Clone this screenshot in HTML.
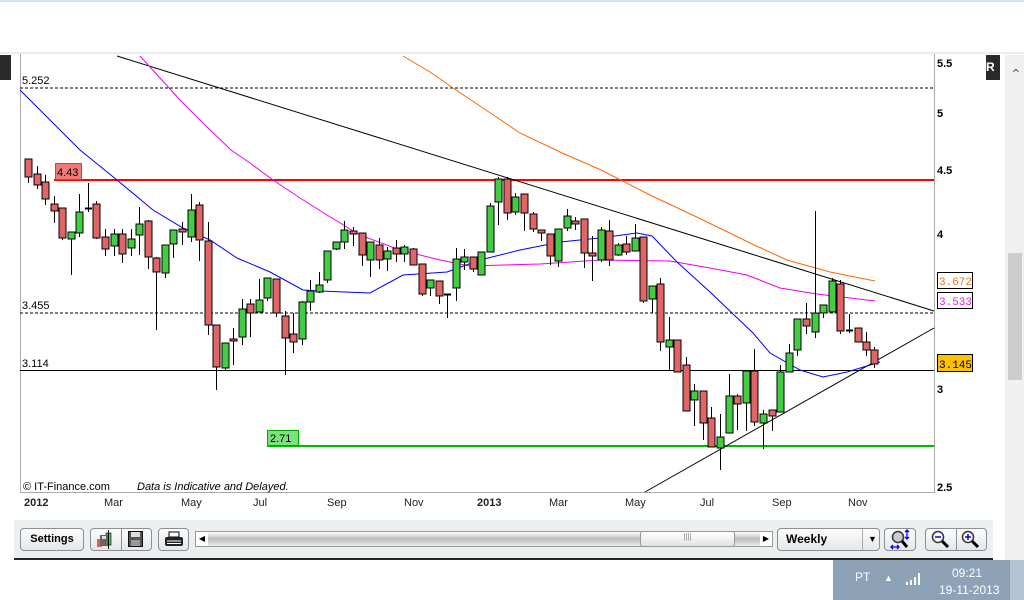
<!DOCTYPE html>
<html><head><meta charset="utf-8"><style>
body{margin:0;width:1024px;height:600px;overflow:hidden;background:#fff;font-family:"Liberation Sans",sans-serif;position:relative}
.a{position:absolute}
.btn{position:absolute;border:1px solid #8a9095;border-radius:4px;background:linear-gradient(#fdfdfd,#e4e6e8);box-sizing:border-box}
.xl{position:absolute;top:497px;font-size:11px;color:#222}
</style></head><body>
<div class="a" style="left:0;top:0;width:1024px;height:2px;background:#cfe3f3"></div>
<div class="a" style="left:0;top:52px;width:1024px;height:2px;background:#e6eef5"></div>
<div class="a" style="left:0;top:55px;width:11px;height:25px;background:#2a2a2a"></div>
<div class="a" style="left:986px;top:55px;width:14px;height:25px;background:#2a2a2a;color:#fff;font-size:12px;font-weight:bold;line-height:25px">R</div>
<div class="a" style="left:1005px;top:55px;width:19px;height:505px;background:#f0f0f0"></div>
<div class="a" style="left:1008px;top:253px;width:14px;height:127px;background:#cdcdcd"></div>
<div class="a" style="left:1010px;top:66px;font-size:14px;color:#666">&#8963;</div>
<svg class="a" style="left:0;top:0" width="1005" height="520" id="c">
<line x1="20.5" y1="54" x2="20.5" y2="493" stroke="#aaa"/>
<line x1="20" y1="492.5" x2="934" y2="492.5" stroke="#aaa"/>
<line x1="934.5" y1="54" x2="934.5" y2="493" stroke="#aaa"/>
<line x1="20" y1="88" x2="934" y2="88" stroke="#000" stroke-dasharray="3,2"/>
<line x1="20" y1="313" x2="934" y2="313" stroke="#000" stroke-dasharray="3,2"/>
<line x1="20" y1="370.5" x2="934" y2="370.5" stroke="#000"/>
<line x1="54" y1="180" x2="934" y2="180" stroke="#f00" stroke-width="2"/>
<line x1="267" y1="446" x2="934" y2="446" stroke="#0b0" stroke-width="2"/>
<rect x="55.5" y="163.5" width="26" height="16" fill="#f07a7a" stroke="#e33"/>
<text x="57" y="176" font-size="11">4.43</text>
<rect x="267.5" y="430.5" width="31" height="15" fill="#7de07d" stroke="#0a0"/>
<text x="270" y="442" font-size="11">2.71</text>
<text x="22" y="84" font-size="11">5.252</text>
<text x="22" y="309" font-size="11">3.455</text>
<text x="22" y="367" font-size="11">3.114</text>
<text x="23" y="490" font-size="11">© IT-Finance.com</text>
<text x="137" y="490" font-size="11" font-style="italic">Data is Indicative and Delayed.</text>
<g font-size="11" font-weight="bold"><text x="937" y="67">5.5</text><text x="937" y="117">5</text><text x="937" y="174">4.5</text><text x="937" y="238">4</text><text x="937" y="393">3</text><text x="937" y="491">2.5</text></g>
<rect x="937.5" y="272.5" width="35" height="16" fill="#fff" stroke="#000"/><text x="939" y="285" font-size="11" fill="#f07020" font-family="Liberation Mono">3.672</text>
<rect x="937.5" y="292.5" width="35" height="16" fill="#fff" stroke="#000"/><text x="939" y="305" font-size="11" fill="#e020e0" font-family="Liberation Mono">3.533</text>
<rect x="937.5" y="354.5" width="35" height="17" fill="#ffc000" stroke="#000"/><text x="939" y="368" font-size="11" font-family="Liberation Mono">3.145</text>
<line x1="117" y1="56" x2="934" y2="311" stroke="#000"/>
<line x1="645" y1="492" x2="934" y2="328" stroke="#000"/>
<polyline fill="none" stroke="#f60" points="403,56 430,72 453,88 480,106 520,133 560,152 601,170 650,195 703,220 750,243 787,260 830,272 875,281"/>
<polyline fill="none" stroke="#e0e" points="140,56 160,78 180,100 205,125 231,150 250,163 273,180 300,198 327,215 360,235 400,250 440,260 470,266 540,264 600,260 670,261 710,268 747,275 780,288 817,294 875,301"/>
<polyline fill="none" stroke="#00f" points="20,90 50,120 80,150 117,180 153,210 183,228 210,240 237,258 270,272 303,290 320,291 370,293 403,275 447,272 480,260 520,250 560,242 600,238 637,233 652,236 677,262 710,292 753,333 770,353 800,370 823,377 847,372 880,362"/>
<g id="cd"></g>
</svg>
<div class="xl" style="left:24px;font-weight:bold">2012</div><div class="xl" style="left:104px">Mar</div><div class="xl" style="left:181px">May</div><div class="xl" style="left:253px">Jul</div><div class="xl" style="left:327px">Sep</div><div class="xl" style="left:404px">Nov</div><div class="xl" style="left:477px;font-weight:bold">2013</div><div class="xl" style="left:549px">Mar</div><div class="xl" style="left:625px">May</div><div class="xl" style="left:700px">Jul</div><div class="xl" style="left:772px">Sep</div><div class="xl" style="left:848px">Nov</div>
<div class="a" style="left:14px;top:520px;width:979px;height:38px;background:#eceff0"></div>
<div class="a" style="left:14px;top:558px;width:979px;height:2px;background:#222"></div>
<div class="btn" style="left:20px;top:528px;width:64px;height:23px;font-size:11px;font-weight:bold;text-align:center;line-height:21px">Settings</div>
<div class="btn" style="left:90px;top:528px;width:62px;height:23px"></div>
<div class="a" style="left:121px;top:528px;width:1px;height:23px;background:#8a9095"></div>
<svg class="a" style="left:96px;top:530px" width="20" height="20"><rect x="1" y="9" width="5" height="8" fill="#e55"/><rect x="10" y="3" width="5" height="12" fill="#4c4" stroke="#000" stroke-width=".6"/><rect x="4" y="5" width="8" height="11" fill="#666"/><rect x="6" y="6" width="4" height="3" fill="#ddd"/><line x1="12.5" y1="0" x2="12.5" y2="19" stroke="#000"/></svg>
<svg class="a" style="left:128px;top:531px" width="16" height="17"><rect x="0.5" y=".5" width="14" height="15" fill="#555" stroke="#111"/><rect x="3" y="1" width="9" height="5" fill="#ddd"/><rect x="3" y="9" width="9" height="6" fill="#999"/></svg>
<div class="btn" style="left:158px;top:528px;width:31px;height:23px"></div>
<svg class="a" style="left:164px;top:531px" width="20" height="17"><rect x="5" y="1" width="10" height="5" fill="#fff" stroke="#000"/><rect x="1" y="6" width="18" height="9" rx="2" fill="#222"/><line x1="3" y1="10" x2="17" y2="10" stroke="#fff"/><line x1="3" y1="12.5" x2="17" y2="12.5" stroke="#fff"/></svg>
<div class="a" style="left:195px;top:531px;width:578px;height:16px;background:linear-gradient(#fff,#bbb 50%,#eee);border:1px solid #999;box-sizing:border-box"></div>
<div class="a" style="left:640px;top:531px;width:95px;height:16px;background:linear-gradient(#fff,#e2e2e2);border:1px solid #999;border-radius:3px;box-sizing:border-box;font-size:8px;text-align:center;color:#888">||||</div>
<div class="a" style="left:196px;top:532px;width:12px;height:14px;background:#fff;font-size:8px;text-align:center;line-height:14px">◀</div>
<div class="a" style="left:760px;top:532px;width:12px;height:14px;background:#fff;font-size:8px;text-align:center;line-height:14px">▶</div>
<div class="btn" style="left:777px;top:528px;width:103px;height:23px;font-size:12px;font-weight:bold;line-height:21px;padding-left:8px">Weekly<span style="position:absolute;left:84px;top:0;border-left:1px solid #aaa;padding-left:5px;font-size:9px">▼</span></div>
<div class="btn" style="left:884px;top:528px;width:32px;height:23px"></div>
<svg class="a" style="left:890px;top:529px" width="22" height="22"><circle cx="8" cy="8" r="5.5" fill="#ccc" stroke="#333" stroke-width="1.5"/><line x1="12" y1="12" x2="17" y2="18" stroke="#000" stroke-width="3"/><path d="M17 1v9M15 3l2-2 2 2M15 8l2 2 2-2M1 18h8M3 16l-2 2 2 2M7 16l2 2-2 2" stroke="#00f" stroke-width="1.3" fill="none"/></svg>
<div class="btn" style="left:925px;top:528px;width:62px;height:23px"><span style="position:absolute;left:30px;top:0;width:1px;height:21px;background:#8a9095"></span></div>
<svg class="a" style="left:930px;top:529px" width="22" height="22"><circle cx="8" cy="8" r="5.5" fill="#fff" stroke="#333" stroke-width="1.5"/><line x1="12" y1="12" x2="18" y2="18" stroke="#000" stroke-width="3"/><line x1="5" y1="8" x2="11" y2="8" stroke="#00f" stroke-width="1.5"/></svg>
<svg class="a" style="left:960px;top:529px" width="22" height="22"><circle cx="8" cy="8" r="5.5" fill="#fff" stroke="#333" stroke-width="1.5"/><line x1="12" y1="12" x2="18" y2="18" stroke="#000" stroke-width="3"/><path d="M5 8h6M8 5v6" stroke="#00f" stroke-width="1.5"/></svg>
<div class="a" style="left:833px;top:560px;width:177px;height:40px;background:#8ea2b7"></div>
<div class="a" style="left:1010px;top:560px;width:14px;height:40px;background:#b4c3d2"></div>
<div class="a" style="left:855px;top:570px;font-size:12px;color:#fff">PT</div>
<div class="a" style="left:884px;top:573px;font-size:9px;color:#fff">▲</div>
<svg class="a" style="left:905px;top:572px" width="18" height="14"><g fill="#fff"><rect x="1" y="10" width="2" height="3"/><rect x="5" y="8" width="2" height="5"/><rect x="9" y="5" width="2" height="8"/><rect x="13" y="1" width="2" height="12"/></g></svg>
<div class="a" style="left:952px;top:566px;font-size:12px;color:#fff">09:21</div>
<div class="a" style="left:939px;top:583px;font-size:12px;color:#fff">19-11-2013</div>
<script>
var C=[[28,'r',159,177,159,183],[37,'r',174,185,166,189],[45,'r',182,199,175,205],[54,'r',204,211,196,223],[62,'r',208,238,208,240],[71,'g',232,239,232,275],[79,'g',212,233,194,237],[88,'d',208,208,183,212],[96,'r',204,238,201,239],[105,'r',237,249,229,256],[114,'g',234,246,229,256],[122,'r',234,254,229,263],[131,'g',239,248,229,256],[139,'g',224,235,207,255],[148,'r',221,257,220,269],[156,'r',258,272,257,330],[165,'g',245,273,245,278],[173,'g',230,244,230,258],[182,'r',229,232,222,245],[191,'g',210,237,194,242],[199,'r',205,240,202,261],[208,'r',241,325,222,335],[216,'r',325,367,325,390],[225,'g',343,368,343,370],[233,'r',339,341,328,365],[242,'g',309,337,299,345],[250,'r',304,313,299,337],[259,'g',300,312,279,312],[267,'g',278,298,278,301],[276,'r',279,313,279,317],[285,'r',316,338,311,375],[293,'r',334,342,313,353],[302,'g',302,339,301,345],[310,'g',291,302,280,311],[319,'g',285,292,272,293],[327,'g',251,280,251,283],[336,'g',242,249,242,250],[344,'g',230,242,221,249],[353,'r',231,234,227,246],[362,'r',233,255,233,266],[370,'g',242,260,242,277],[379,'r',245,260,238,269],[387,'g',251,259,247,271],[396,'r',248,254,240,262],[404,'g',247,254,245,262],[413,'r',249,265,248,265],[422,'r',264,294,264,296],[430,'g',280,288,280,296],[439,'r',281,296,281,304],[447,'d',294,294,294,318],[456,'g',259,288,248,301],[464,'g',257,262,249,270],[473,'r',257,269,257,272],[481,'g',252,275,252,275],[490,'g',206,252,203,252],[498,'g',179,202,177,225],[507,'r',179,213,177,220],[515,'g',197,212,193,215],[524,'r',194,213,194,231],[533,'r',214,229,212,232],[541,'r',230,233,230,241],[550,'r',234,256,234,265],[558,'g',229,261,229,267],[567,'g',216,228,209,231],[575,'r',221,224,217,230],[584,'r',219,253,219,268],[592,'r',253,256,236,281],[601,'g',230,260,227,262],[609,'r',231,260,220,266],[618,'g',245,255,243,256],[626,'r',244,252,236,255],[635,'g',238,251,224,251],[643,'r',237,301,237,303],[652,'g',286,299,286,313],[660,'r',284,342,278,351],[669,'g',340,347,317,370],[677,'r',340,372,340,372],[686,'r',365,411,357,411],[694,'g',391,400,384,426],[703,'r',391,423,391,440],[711,'r',418,447,407,447],[720,'g',437,448,414,470],[729,'g',396,433,374,433],[737,'r',396,404,394,430],[746,'g',371,403,371,431],[754,'r',371,422,349,426],[763,'g',414,423,410,449],[772,'r',410,416,410,431],[780,'g',372,412,365,412],[789,'g',353,372,344,372],[797,'g',319,350,319,356],[806,'r',319,326,303,334],[815,'g',313,332,211,338],[823,'g',305,313,305,318],[832,'g',281,312,278,313],[840,'r',284,331,280,334],[849,'d',330,330,314,333],[858,'r',328,342,328,342],[866,'r',342,350,332,356],[874,'r',350,364,347,368]];
var s='';C.forEach(function(c){var x=c[0];s+='<line x1="'+(x+.5)+'" y1="'+c[4]+'" x2="'+(x+.5)+'" y2="'+c[5]+'" stroke="#000"/>';if(c[1]=='d'){s+='<line x1="'+(x-3)+'" y1="'+(c[2]+.5)+'" x2="'+(x+4)+'" y2="'+(c[2]+.5)+'" stroke="#000" stroke-width="2"/>';}else{s+='<rect x="'+(x-3)+'" y="'+c[2]+'" width="7" height="'+Math.max(2,c[3]-c[2])+'" fill="'+(c[1]=='r'?'#e06666':'#44cc44')+'" stroke="#000"/>';}});
document.getElementById('cd').innerHTML=s;
</script>
</body></html>
